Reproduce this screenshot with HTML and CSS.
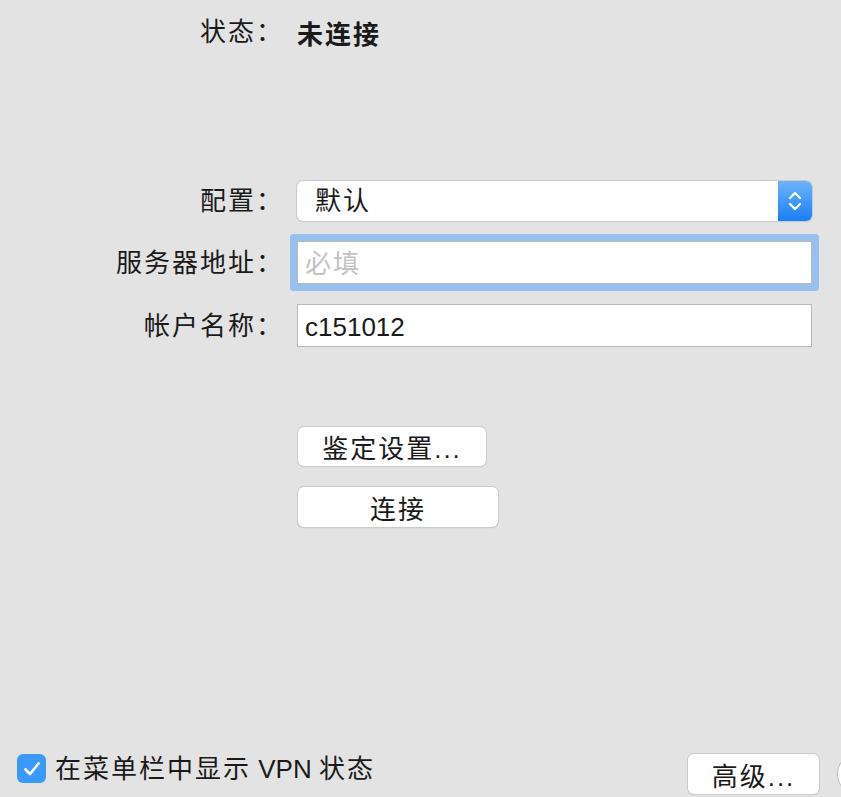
FILE: index.html
```html
<!DOCTYPE html>
<html lang="zh-CN">

<head>
    <meta charset="UTF-8">
    <meta name="viewport" content="width=device-width, initial-scale=1.0">
    <title>VPN</title>
    <link rel="stylesheet" href="styles.css">
</head>

<body>
    <div class="pane">
        <div class="grid status-row">
            <span class="label">状态：</span>
            <span class="status-value">未连接</span>
        </div>

        <div class="grid form">
            <label class="label">配置：</label>
            <div class="select">
                <span class="select-text">默认</span>
                <span class="select-arrows">
                    <svg width="14" height="28" viewBox="0 0 14 28">
                        <path d="M2 11 L7 6 L12 11" fill="none" stroke="#fff" stroke-width="2.2" stroke-linecap="round" stroke-linejoin="round" />
                        <path d="M2 17 L7 22 L12 17" fill="none" stroke="#fff" stroke-width="2.2" stroke-linecap="round" stroke-linejoin="round" />
                    </svg>
                </span>
            </div>

            <label for="server" class="label">服务器地址：</label>
            <input type="text" id="server" class="input focused" placeholder="必填" />

            <label for="account" class="label">帐户名称：</label>
            <input type="text" id="account" class="input" value="c151012" />
        </div>

        <div class="grid actions">
            <span></span>
            <div class="buttons">
                <button class="button auth-btn">鉴定设置...</button>
                <button class="button connect-btn">连接</button>
            </div>
        </div>

        <div class="footer">
            <span class="checkbox">
                <svg width="18" height="16" viewBox="0 0 18 16">
                    <path d="M2.5 8.5 L7 13 L15.5 2.5" fill="none" stroke="#fff" stroke-width="2.6" stroke-linecap="round" stroke-linejoin="round" />
                </svg>
            </span>
            <span class="footer-text"><span class="cjk">在菜单栏中显示</span> VPN <span class="cjk">状态</span></span>
            <button class="button advanced-btn">高级...</button>
            <span class="help"></span>
        </div>
    </div>
</body>

</html>
```

FILE: styles.css
```css
html,
body {
    margin: 0;
    overflow: hidden;
}

body {
    background: #e3e3e3;
    font-family: "Liberation Sans", "Noto Sans CJK SC", sans-serif;
    font-size: 26px;
    color: #1a1a1a;
}

.pane {
    width: 841px;
    height: 797px;
    padding-top: 12px;
    box-sizing: border-box;
}

.grid {
    display: grid;
    grid-template-columns: 284px 515px;
    column-gap: 13px;
    align-items: center;
}

.label {
    text-align: right;
    letter-spacing: 2px;
    line-height: 40px;
}

.status-row {
    height: 40px;
}

.status-value {
    font-weight: bold;
    letter-spacing: 2px;
}

.form {
    margin-top: 129px;
    row-gap: 20px;
}

.select {
    display: flex;
    height: 40px;
    background: #fff;
    border-radius: 6px;
    box-shadow: 0 0 0 1px #c9c9c9, 0 1px 1px rgba(0, 0, 0, 0.15);
    overflow: hidden;
}

.select-text {
    flex: 1;
    padding-left: 18px;
    line-height: 40px;
    letter-spacing: 2px;
}

.select-arrows {
    width: 34px;
    display: flex;
    align-items: center;
    justify-content: center;
    background: linear-gradient(#6cb4fb, #1a7ef6);
}

.input {
    height: 43px;
    box-sizing: border-box;
    border: 1px solid #b9b9b9;
    background: #fff;
    padding: 3px 7px 0;
    font-family: inherit;
    font-size: 26px;
    color: #1a1a1a;
    outline: none;
    margin: 0;
}

.input::placeholder {
    color: #c2c2c2;
    letter-spacing: 2px;
}

.focused {
    box-shadow: 0 0 0 7px #97c0ef;
    border-radius: 1px;
}

.actions {
    margin-top: 80px;
}

.buttons {
    display: flex;
    flex-direction: column;
    align-items: flex-start;
    gap: 21px;
}

.button {
    background: #fff;
    border: 0;
    border-radius: 6px;
    box-shadow: 0 0 0 1px #cbcbcb, 0 1px 1px rgba(0, 0, 0, 0.2);
    font-family: inherit;
    font-size: 26px;
    color: #1a1a1a;
    letter-spacing: 2px;
    padding: 0;
    margin-left: 1px;
}

.auth-btn {
    width: 188px;
    height: 39px;
}

.connect-btn {
    width: 200px;
    height: 40px;
}

.footer {
    display: flex;
    align-items: flex-start;
    margin-top: 227px;
    height: 40px;
}

.checkbox {
    width: 29px;
    height: 29px;
    margin-left: 17px;
    border-radius: 6px;
    background: #3b99fc;
    display: flex;
    align-items: center;
    justify-content: center;
}

.footer-text {
    margin-left: 9px;
    line-height: 30px;
}

.cjk {
    letter-spacing: 2px;
}

.advanced-btn {
    margin-left: auto;
    width: 131px;
    height: 40px;
}

.help {
    width: 40px;
    height: 40px;
    margin-left: 19px;
    margin-right: -37px;
    border-radius: 50%;
    background: #fff;
    box-shadow: 0 0 0 1px #bdbdbd;
    flex-shrink: 0;
}
```
